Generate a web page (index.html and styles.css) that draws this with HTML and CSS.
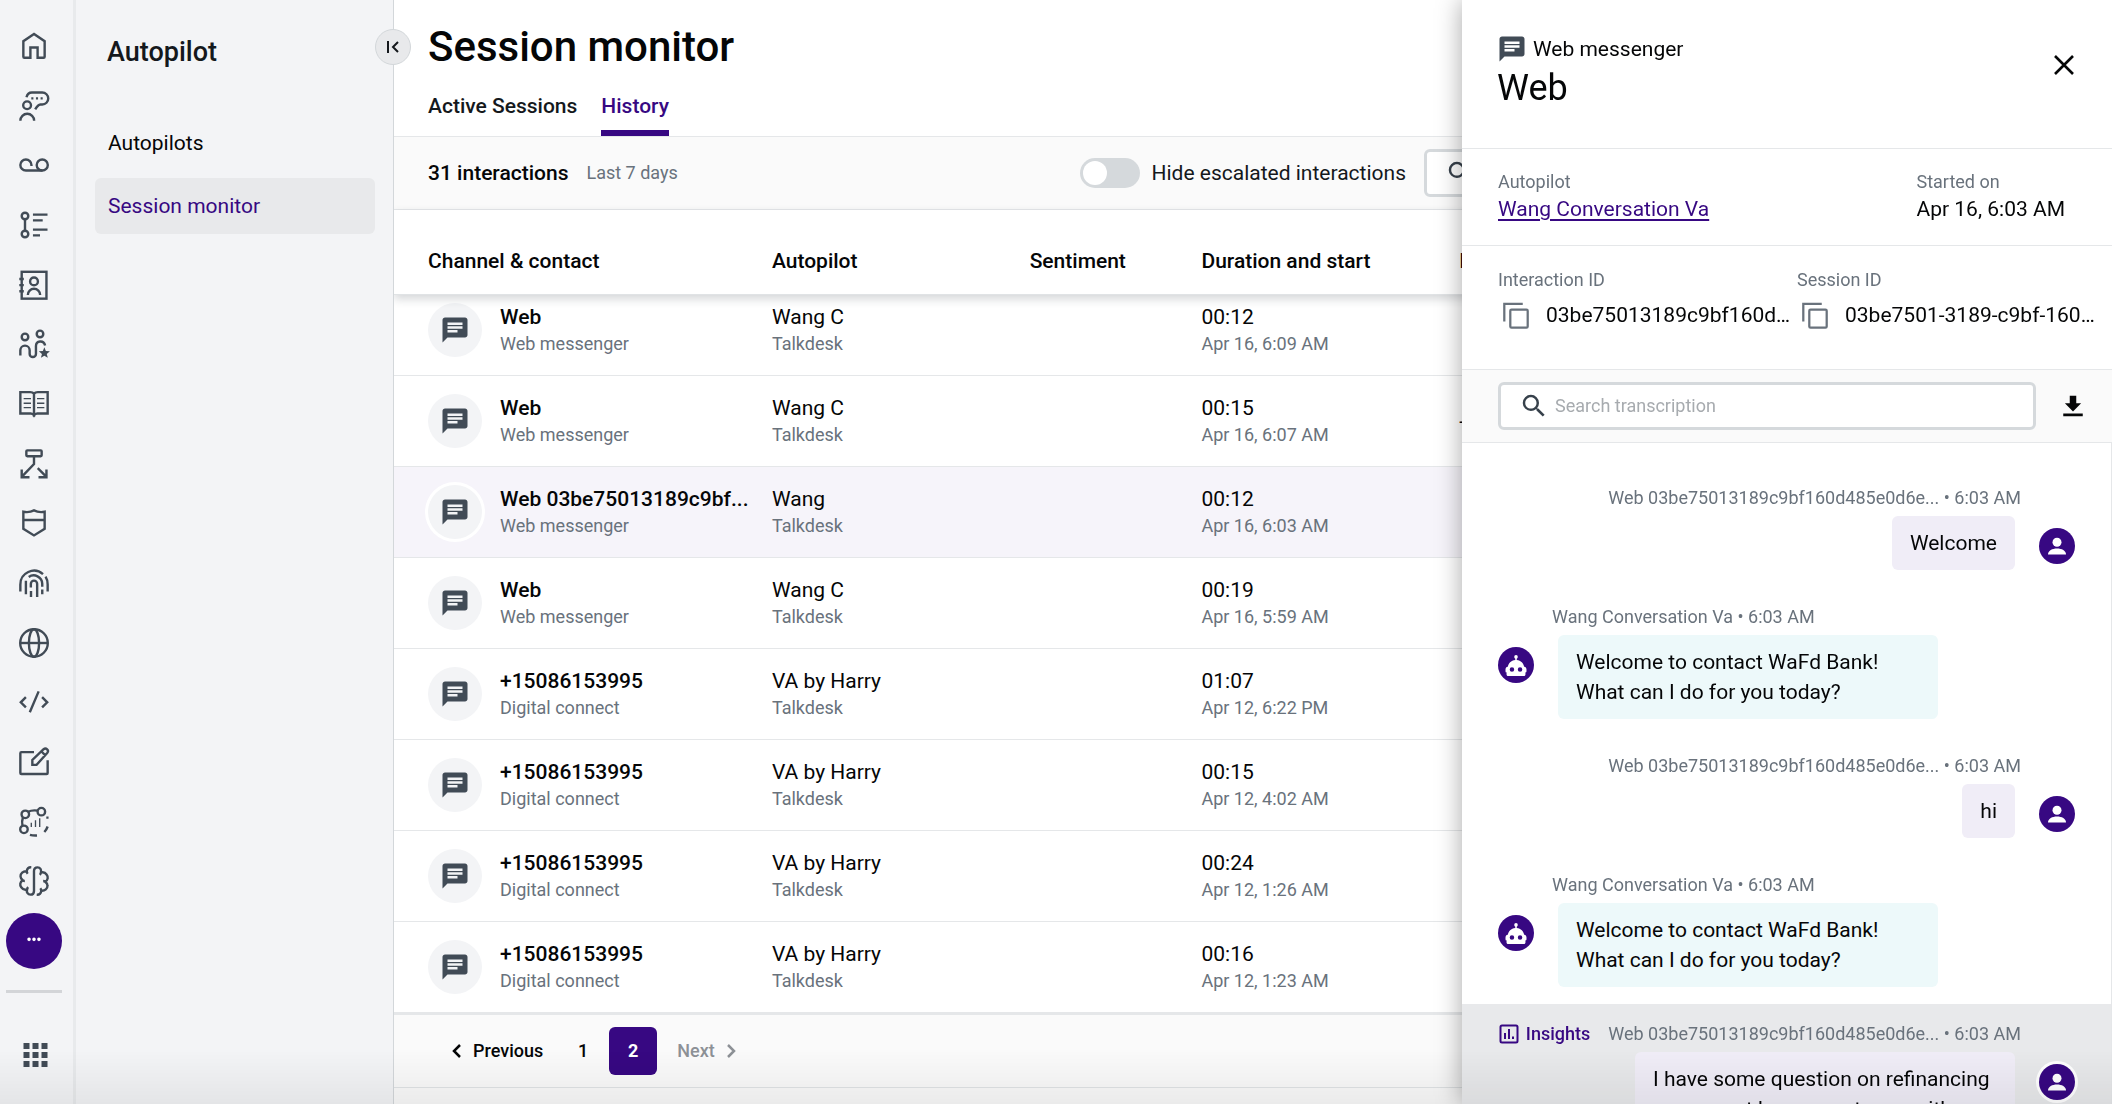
FILE: index.html
```html
<!DOCTYPE html>
<html lang="en">
<head>
    <meta charset="UTF-8">
    <meta name="viewport" content="width=device-width, initial-scale=1.0">
    <title>Session monitor</title>
    <link rel="stylesheet" href="styles.css">
</head>
<body>
    <!-- Shared icons -->
    <svg class="sprite" aria-hidden="true">
        <symbol id="chat" viewBox="0 0 24 24"><path fill="currentColor" d="M20 2H4c-1.1 0-2 .9-2 2v18l4-4h14c1.1 0 2-.9 2-2V4c0-1.100-.9-2-2-2zM6 9h12v2H6V9zm8 5H6v-2h8v2zm4-6H6V6h12v2z"/></symbol>
        <symbol id="search" viewBox="0 0 24 24"><path fill="currentColor" d="M15.500 14h-.79l-.28-.27A6.471 6.471 0 0 0 16 9.500 6.500 6.500 0 1 0 9.500 16c1.610 0 3.090-.59 4.230-1.570l.27.28v.79l5 4.990L20.490 19l-4.990-5zm-6 0C7.010 14 5 11.990 5 9.500S7.010 5 9.500 5 14 7.010 14 9.500 11.990 14 9.500 14z"/></symbol>
        <symbol id="user" viewBox="0 0 24 24"><circle cx="12" cy="9.500" r="3" fill="currentColor"/><path fill="currentColor" d="M6 17.600c0-2.600 2.800-4 6-4s6 1.400 6 4z"/></symbol>
        <symbol id="bot" viewBox="0 0 24 24"><circle cx="12" cy="6.600" r="1.200" fill="currentColor"/><path fill="currentColor" fill-rule="evenodd" d="M11.500 7h1v1.600c2.800.3 4.600 2.300 5 4.600.9.100 1.500.8 1.500 1.800v1.200c0 .5-.3.800-.7.8v1.300c0 .6-.4 1-1 1H6.700c-.6 0-1-.4-1-1V17c-.4 0-.7-.3-.7-.8V15c0-1 .6-1.700 1.500-1.800.4-2.300 2.200-4.300 5-4.600zM9.300 13.500a1.500 1.500 0 1 0 0 3 1.500 1.500 0 0 0 0-3zm5.400 0a1.500 1.500 0 1 0 0 3 1.500 1.500 0 0 0 0-3z"/></symbol>
        <symbol id="copy" viewBox="0 0 24 24"><path fill="none" stroke="currentColor" stroke-width="1.500" d="M4.200 16.400V4.600h12.300"/><rect x="8.200" y="8.400" width="11.600" height="12" rx=".8" fill="none" stroke="currentColor" stroke-width="1.500"/></symbol>
    </svg>

    <div class="app">
        <nav class="rail" aria-label="Applications">
            <div class="rail-list">
                <button class="rail-button" aria-label="Home"><svg viewBox="0 0 24 24"><path d="M12 4 4.900 8.800v10.300c0 .4.300.7.700.7h4V13h4.800v6.800h4c.4 0 .7-.3.700-.7V8.800z"/></svg></button>
                <button class="rail-button" aria-label="Conversations"><svg viewBox="0 0 24 24"><circle cx="7.400" cy="11.500" r="2.600"/><path d="M2.900 21.800a4.600 4.600 0 0 1 9.200 0M7 6.200C7.400 4.300 8.700 3 10.600 3h6.900a4 4 0 0 1 0 8h-1.200c-1.200.1-2.600 1.700-3.500 3.300"/><path stroke-dasharray="1.400 1.700" d="M10.200 6.900h7.600"/></svg></button>
                <button class="rail-button" aria-label="Voicemail"><svg viewBox="0 0 24 24"><path d="M10.300 12.600V12a3.700 3.700 0 1 0-3.700 3.700h11"/><circle cx="17.500" cy="12" r="3.700"/></svg></button>
                <button class="rail-button" aria-label="Activities"><svg viewBox="0 0 24 24"><circle cx="6" cy="6" r="2.200"/><circle cx="6" cy="18" r="2.200"/><path d="M6 8.200v7.600M11.300 5.100H21M11.300 8.900h6.500M11.300 15.100H21M11.300 18.900H16"/></svg></button>
                <button class="rail-button" aria-label="Contacts"><svg viewBox="0 0 24 24"><rect x="3.800" y="3.200" width="16.500" height="17.900"/><circle cx="12" cy="9.600" r="2.600"/><path d="M7.900 18.600a4.100 4.100 0 0 1 8.200 0M2.200 8h3M2.200 12.100h3M2.200 16.200h3"/></svg></button>
                <button class="rail-button" aria-label="Teams"><svg viewBox="0 0 24 24"><circle cx="6" cy="7.300" r="2.200"/><circle cx="16" cy="5.300" r="2.200"/><path d="M2.900 19.600v-3.400a3.100 3.100 0 0 1 6.200 0v2.400a2.100 2.100 0 0 0 4.200 0v-5.200c0-3.800 5.200-4.300 6.100-.4"/><path class="solid" d="m18.900 14.200 1 2.500 2.700.2-2.100 1.700.7 2.600-2.300-1.400-2.300 1.400.7-2.600-2.100-1.700 2.700-.2z"/></svg></button>
                <button class="rail-button" aria-label="Knowledge"><svg viewBox="0 0 24 24"><path d="M12 5.200c-.6-.8-1.400-1.100-2.500-1.100H2.900v14.200h6.900c1 0 1.700.4 2.200 1.300.5-.9 1.200-1.300 2.200-1.300h6.900V4.100h-6.600c-1.100 0-1.900.3-2.500 1.100zM12 5.200v15.300"/><path class="thin" d="M5.100 8.400H10M5.100 11.500H10M5.100 14.400H10M14 8.400h4.900M14 11.500h4.900M14 14.400h4.900"/></svg></button>
                <button class="rail-button" aria-label="Routing"><svg viewBox="0 0 24 24"><rect x="6.900" y="2.900" width="10.200" height="3.900" rx=".6"/><path d="M12 6.800V12l-8.200 8.600M3.800 15.600v5.200H9M14.500 14.800l5.800 5.800M20.300 15.600v5.200H15"/></svg></button>
                <button class="rail-button" aria-label="Security"><svg viewBox="0 0 24 24"><path d="M4.900 4.500c2.700.5 5 .2 7.100-.9 2.100 1.100 4.400 1.400 7.100.9v11.400L12 20.300l-7.100-4.400zM4.900 10h14.200"/></svg></button>
                <button class="rail-button" aria-label="Identity"><svg viewBox="0 0 24 24"><path d="M2.900 17.600v-4.500a9.100 9.100 0 0 1 15.100-7M19.700 7.700a9 9 0 0 1 1.400 5.300v4.600M6.600 19.500v-9M8.500 8a5.700 5.700 0 0 1 9 4.500v2M9.900 15v-2.500a2.100 2.100 0 0 1 4.200 0v8.800M10 17.300v4M17.500 16.300v3.200"/></svg></button>
                <button class="rail-button" aria-label="Web"><svg viewBox="0 0 24 24"><circle cx="12" cy="12" r="9.200"/><ellipse cx="12" cy="12" rx="3.400" ry="9.200"/><path d="M2.800 12h18.400"/></svg></button>
                <button class="rail-button" aria-label="Developers"><svg viewBox="0 0 24 24"><path d="M6.600 8.800 3.200 12.200l3.400 3.400M17.400 8.800l3.400 3.400-3.400 3.400M15.100 4.900 9.200 18.800"/></svg></button>
                <button class="rail-button" aria-label="Editor"><svg viewBox="0 0 24 24"><path d="M12 5.400H3.600a.7.7 0 0 0-.7.700v13.200c0 .4.300.7.700.7h16.800c.4 0 .7-.3.700-.7v-8.500M10.900 13.900v-3.300l7.500-7.100c1.600-1.300 3.900.7 2.400 2.500L13.700 13.900zM17 5l2.400 2.400"/></svg></button>
                <button class="rail-button" aria-label="Analytics"><svg viewBox="0 0 24 24"><circle cx="6.200" cy="6.900" r="2.500"/><circle cx="16.900" cy="5.100" r="2.500"/><circle cx="5.300" cy="16.900" r="2.500"/><path d="M8 5.200c2-1 4-1.200 6.400-.8M4.600 9c-.6 1.700-.7 3.400-.3 5.300M9.300 20.600c1.500.4 3 .5 4.700.4M18.900 18.700c.9-1 1.700-2.200 2.200-3.700M20.200 9.100h1.500"/><path class="thin" d="M10.200 12.500v2.800M13 10.800v4.500M15.800 9.500v5.800"/></svg></button>
                <button class="rail-button" aria-label="AI"><svg viewBox="0 0 24 24"><path d="M10.200 2.900c-1.800-.2-3 .9-3 2.600-2.500-.3-4.300 1.500-4.200 3.400 0 1.200.7 2 1.500 2.600-1.900 1.200-2.100 3.200-1 4.700.9 1.300 2.200 1.900 3.900 1.400-.6 2 .6 3.500 2.200 3.500 1.500 0 2.400-1 2.400-2.500V5.400c0-1.500 1-2.500 2.400-2.500 1.600 0 2.800 1.500 2.200 3.500 1.700-.5 3 .1 3.900 1.400 1.100 1.500.9 3.500-1 4.700.8.600 1.500 1.400 1.500 2.600.1 1.900-1.700 3.700-4.200 3.400 0 1.700-1.200 2.800-3 2.600M7.200 5.500c0 .7.200 1.200.6 1.700M4.500 11.500c.4.300.9.500 1.400.5M7.400 17.600c0-.6.300-1.100.7-1.500M16.600 6.400c0 .6-.3 1.100-.7 1.500M19.500 12.500c-.4-.3-.9-.5-1.400-.5M16.800 18.500c0-.7-.2-1.200-.6-1.700"/></svg></button>
                <button class="rail-button rail-more" aria-label="More"><svg viewBox="0 0 24 24"><path class="solid" d="M8.700 9.700a1.200 1.200 0 1 0 0 2.400 1.200 1.200 0 0 0 0-2.400zm3.300 0a1.200 1.200 0 1 0 0 2.400 1.200 1.200 0 0 0 0-2.400zm3.300 0a1.200 1.200 0 1 0 0 2.400 1.200 1.200 0 0 0 0-2.400z"/></svg></button>
            </div>
            <hr class="rail-line">
            <button class="rail-button" aria-label="Apps"><svg viewBox="0 0 24 24"><path class="solid" d="M5 4h4v4H5zm6 0h4v4h-4zm6 0h4v4h-4zM5 10h4v4H5zm6 0h4v4h-4zm6 0h4v4h-4zM5 16h4v4H5zm6 0h4v4h-4zm6 0h4v4h-4z"/></svg></button>
        </nav>

        <aside class="sidebar">
            <h2 class="sidebar-title">Autopilot</h2>
            <nav class="sidebar-nav" aria-label="Autopilot">
                <a class="sidebar-link" href="#">Autopilots</a>
                <a class="sidebar-link active" href="#">Session monitor</a>
            </nav>
            <button class="collapse" aria-label="Collapse menu"><svg viewBox="0 0 18 18"><path d="M4 3v12M14 4 9 9l5 5"/></svg></button>
        </aside>

        <main class="content">
            <header class="page-header">
                <h1>Session monitor</h1>
                <nav class="tabs" aria-label="Sessions">
                    <a class="tab" href="#">Active Sessions</a>
                    <a class="tab active" href="#">History</a>
                </nav>
            </header>

            <div class="filters">
                <strong class="count">31 interactions</strong>
                <span class="muted">Last 7 days</span>
                <label class="toggle">
                    <input type="checkbox">
                    Hide escalated interactions
                </label>
                <label class="search-box filters-search">
                    <svg><use href="#search"/></svg>
                    <input type="search" aria-label="Search interactions">
                </label>
            </div>

            <table class="sessions">
                <colgroup>
                    <col class="col-contact">
                    <col class="col-autopilot">
                    <col class="col-sentiment">
                    <col class="col-duration">
                    <col>
                </colgroup>
                <thead>
                    <tr>
                        <th>Channel &amp; contact</th>
                        <th>Autopilot</th>
                        <th>Sentiment</th>
                        <th>Duration and start</th>
                        <th>Intent</th>
                    </tr>
                </thead>
                <tbody>
                    <tr>
                        <td><div class="contact"><span class="channel"><svg><use href="#chat"/></svg></span><div><b>Web</b><small>Web messenger</small></div></div></td>
                        <td>Wang C<small>Talkdesk</small></td>
                        <td></td>
                        <td>00:12<small>Apr 16, 6:09 AM</small></td>
                        <td></td>
                    </tr>
                    <tr>
                        <td><div class="contact"><span class="channel"><svg><use href="#chat"/></svg></span><div><b>Web</b><small>Web messenger</small></div></div></td>
                        <td>Wang C<small>Talkdesk</small></td>
                        <td></td>
                        <td>00:15<small>Apr 16, 6:07 AM</small></td>
                        <td>-</td>
                    </tr>
                    <tr class="selected">
                        <td><div class="contact"><span class="channel"><svg><use href="#chat"/></svg></span><div><b>Web 03be75013189c9bf...</b><small>Web messenger</small></div></div></td>
                        <td>Wang<small>Talkdesk</small></td>
                        <td></td>
                        <td>00:12<small>Apr 16, 6:03 AM</small></td>
                        <td></td>
                    </tr>
                    <tr>
                        <td><div class="contact"><span class="channel"><svg><use href="#chat"/></svg></span><div><b>Web</b><small>Web messenger</small></div></div></td>
                        <td>Wang C<small>Talkdesk</small></td>
                        <td></td>
                        <td>00:19<small>Apr 16, 5:59 AM</small></td>
                        <td></td>
                    </tr>
                    <tr>
                        <td><div class="contact"><span class="channel"><svg><use href="#chat"/></svg></span><div><b>+15086153995</b><small>Digital connect</small></div></div></td>
                        <td>VA by Harry<small>Talkdesk</small></td>
                        <td></td>
                        <td>01:07<small>Apr 12, 6:22 PM</small></td>
                        <td></td>
                    </tr>
                    <tr>
                        <td><div class="contact"><span class="channel"><svg><use href="#chat"/></svg></span><div><b>+15086153995</b><small>Digital connect</small></div></div></td>
                        <td>VA by Harry<small>Talkdesk</small></td>
                        <td></td>
                        <td>00:15<small>Apr 12, 4:02 AM</small></td>
                        <td></td>
                    </tr>
                    <tr>
                        <td><div class="contact"><span class="channel"><svg><use href="#chat"/></svg></span><div><b>+15086153995</b><small>Digital connect</small></div></div></td>
                        <td>VA by Harry<small>Talkdesk</small></td>
                        <td></td>
                        <td>00:24<small>Apr 12, 1:26 AM</small></td>
                        <td></td>
                    </tr>
                    <tr>
                        <td><div class="contact"><span class="channel"><svg><use href="#chat"/></svg></span><div><b>+15086153995</b><small>Digital connect</small></div></div></td>
                        <td>VA by Harry<small>Talkdesk</small></td>
                        <td></td>
                        <td>00:16<small>Apr 12, 1:23 AM</small></td>
                        <td></td>
                    </tr>
                </tbody>
            </table>

            <nav class="pagination" aria-label="Pages">
                <button class="page-step"><svg viewBox="0 0 18 18"><path d="M12 3 6 9l6 6"/></svg>Previous</button>
                <button class="page">1</button>
                <button class="page current" aria-current="page">2</button>
                <button class="page-step" disabled>Next<svg viewBox="0 0 18 18"><path d="m6 3 6 6-6 6"/></svg></button>
            </nav>
        </main>
    </div>

    <!-- Session details -->
    <section class="drawer" aria-label="Session details">
        <header class="drawer-header">
            <div>
                <div class="drawer-channel"><svg><use href="#chat"/></svg>Web messenger</div>
                <h2>Web</h2>
            </div>
            <button class="close" aria-label="Close"><svg viewBox="0 0 24 24"><path d="m3 3 18 18M21 3 3 21"/></svg></button>
        </header>

        <div class="drawer-info">
            <div>
                <small>Autopilot</small>
                <a href="#">Wang Conversation Va</a>
            </div>
            <div class="started">
                <small>Started on</small>
                Apr 16, 6:03 AM
            </div>
        </div>

        <div class="drawer-ids">
            <div>
                <small>Interaction ID</small>
                <div class="id-value"><button aria-label="Copy interaction ID"><svg><use href="#copy"/></svg></button>03be75013189c9bf160d…</div>
            </div>
            <div>
                <small>Session ID</small>
                <div class="id-value"><button aria-label="Copy session ID"><svg><use href="#copy"/></svg></button>03be7501-3189-c9bf-160…</div>
            </div>
        </div>

        <div class="drawer-search">
            <label class="search-box">
                <svg><use href="#search"/></svg>
                <input type="search" placeholder="Search transcription" aria-label="Search transcription">
            </label>
            <button class="download" aria-label="Download"><svg viewBox="0 0 24 24"><path class="solid" d="M9 2.500h6v7h4.500L12 17 4.500 9.500H9zM3 19h18v2.500H3z"/></svg></button>
        </div>

        <div class="messages">
            <article class="message from-user">
                <div class="meta">Web 03be75013189c9bf160d485e0d6e... • 6:03 AM</div>
                <div class="line"><p class="bubble">Welcome</p><span class="avatar"><svg><use href="#user"/></svg></span></div>
            </article>
            <article class="message">
                <div class="meta">Wang Conversation Va • 6:03 AM</div>
                <div class="line"><span class="avatar"><svg><use href="#bot"/></svg></span><p class="bubble">Welcome to contact WaFd Bank! What can I do for you today?</p></div>
            </article>
            <article class="message from-user">
                <div class="meta">Web 03be75013189c9bf160d485e0d6e... • 6:03 AM</div>
                <div class="line"><p class="bubble">hi</p><span class="avatar"><svg><use href="#user"/></svg></span></div>
            </article>
            <article class="message">
                <div class="meta">Wang Conversation Va • 6:03 AM</div>
                <div class="line"><span class="avatar"><svg><use href="#bot"/></svg></span><p class="bubble">Welcome to contact WaFd Bank! What can I do for you today?</p></div>
            </article>
            <article class="message from-user highlighted">
                <div class="meta">
                    <button class="insights"><svg viewBox="0 0 24 24"><rect x="3.500" y="3.500" width="17" height="17" rx="1.500"/><path d="M8 17v-6M12 17V7M16 17v-2.500"/></svg>Insights</button>
                    Web 03be75013189c9bf160d485e0d6e... • 6:03 AM
                </div>
                <div class="line"><p class="bubble">I have some question on refinancing my current home mortgage with</p><span class="avatar"><svg><use href="#user"/></svg></span></div>
            </article>
        </div>
    </section>
</body>
</html>
```

FILE: styles.css
```css
/* General */
* {
    box-sizing: border-box;
}

body {
    margin: 0;
    height: 100vh;
    overflow: hidden;
    font-family: Roboto, Arial, sans-serif;
    font-size: 21px;
    line-height: 28px;
    color: #050607;
    background-color: #fff;
}

h1, h2, p {
    margin: 0;
    font-weight: 500;
}

button {
    padding: 0;
    border: none;
    background: none;
    font: inherit;
    color: inherit;
    cursor: pointer;
}

a {
    color: inherit;
    text-decoration: none;
}

small {
    display: block;
    font-size: 18px;
    line-height: 26px;
    color: #69727c;
}

svg {
    display: block;
    flex: none;
    width: 30px;
    height: 30px;
    fill: none;
    stroke: none;
}

.sprite {
    display: none;
}

.solid {
    fill: currentColor;
    stroke: none;
}

.app {
    display: flex;
    height: 100%;
}

/* shade along the bottom edge of the window */
body::after {
    content: "";
    position: fixed;
    left: 0;
    right: 0;
    bottom: 0;
    height: 54px;
    background: linear-gradient(rgba(0, 0, 0, 0), rgba(0, 0, 0, 0.06));
    pointer-events: none;
    z-index: 3;
}

/* Icon rail */
.rail {
    flex: none;
    display: flex;
    flex-direction: column;
    align-items: center;
    width: 76px;
    padding: 18px 5px 21px 0;
    background-color: #f3f4f6;
    border-right: 3px solid #e8eaec;
    color: #414b56;
}

.rail-list {
    flex: 1;
    display: flex;
    flex-direction: column;
    justify-content: space-between;
}

.rail-button {
    display: grid;
    place-items: center;
    width: 56px;
    height: 56px;
    border-radius: 50%;
}

.rail-button svg {
    width: 36px;
    height: 36px;
    stroke: currentColor;
    stroke-width: 1.6;
}

.rail-button .thin {
    stroke-width: 0.9;
}

.rail-button .solid {
    stroke: none;
}

.rail-more {
    background-color: #370882;
    color: #fff;
}

.rail-line {
    width: 56px;
    height: 3px;
    margin: 21px 0 34px;
    border: none;
    background-color: #d3d5d8;
}

/* Sidebar */
.sidebar {
    position: relative;
    flex: none;
    width: 318px;
    padding: 36px 18px 0 19px;
    background-color: #f3f4f6;
    border-right: 1px solid #d3d7da;
}

.sidebar-title {
    margin: 0 0 47px 12px;
    font-size: 27px;
    line-height: 32px;
    color: #14181c;
}

.sidebar-nav {
    display: flex;
    flex-direction: column;
    gap: 7px;
}

.sidebar-link {
    padding: 14px 13px;
    border-radius: 6px;
}

.sidebar-link.active {
    background-color: #e8e9eb;
    color: #370882;
}

.collapse {
    position: absolute;
    top: 29px;
    right: -18px;
    display: grid;
    place-items: center;
    width: 36px;
    height: 36px;
    border: 1px solid #d3d7da;
    border-radius: 50%;
    background-color: #e8e9eb;
    z-index: 1;
}

.collapse svg {
    width: 18px;
    height: 18px;
    stroke: #14181c;
    stroke-width: 2;
}

/* Page header */
.content {
    flex: 1;
    display: flex;
    flex-direction: column;
    min-width: 0;
    overflow: hidden;
    background-color: #fafafa;
}

.page-header {
    padding: 22px 34px 0;
    border-bottom: 1px solid #e5e7e9;
    background-color: #fff;
}

h1 {
    font-size: 42px;
    line-height: 50px;
}

.tabs {
    display: flex;
    gap: 24px;
    margin-top: 20px;
}

.tab {
    padding-bottom: 10px;
    border-bottom: 6px solid transparent;
    font-weight: 500;
    color: #14181c;
}

.tab.active {
    border-color: #370882;
    color: #370882;
}

/* Filters */
.filters {
    display: flex;
    align-items: center;
    gap: 18px;
    padding: 12px 24px 12px 34px;
    border-bottom: 1px solid #e5e7e9;
}

.count {
    font-weight: 500;
}

.muted {
    font-size: 18px;
    color: #69727c;
}

.toggle {
    display: flex;
    align-items: center;
    gap: 12px;
    margin-left: auto;
    color: #14181c;
}

.toggle input {
    appearance: none;
    display: flex;
    align-items: center;
    width: 60px;
    height: 30px;
    margin: 0;
    padding: 3px;
    border-radius: 15px;
    background-color: #d5d9dc;
}

.toggle input::before {
    content: "";
    width: 24px;
    height: 24px;
    border-radius: 50%;
    background-color: #fff;
}

.toggle input:checked {
    justify-content: flex-end;
    background-color: #370882;
}

.search-box {
    display: flex;
    align-items: center;
    gap: 6px;
    height: 48px;
    padding: 0 18px;
    border: 3px solid #d5d9dc;
    border-radius: 6px;
    background-color: #fff;
    color: #37414b;
}

.search-box input {
    flex: 1;
    min-width: 0;
    padding: 0;
    border: none;
    outline: none;
    background: none;
    font: inherit;
    font-size: 18px;
}

.search-box input::placeholder {
    color: #a7abaf;
}

.filters-search {
    flex: 0 0 40%;
}

/* Sessions table */
.sessions {
    width: 100%;
    table-layout: fixed;
    border-spacing: 0;
    background-color: #fff;
}

.col-contact {
    width: 22%;
}

.col-autopilot,
.col-duration {
    width: 15%;
}

.col-sentiment {
    width: 10%;
}

.sessions thead {
    position: relative;
    box-shadow: 0 4px 9px rgba(40, 50, 60, 0.2);
}

.sessions th {
    padding: 37px 0 19px;
    border-bottom: 1px solid #e0e3e5;
    font-weight: 500;
    text-align: left;
    background-color: #fff;
}

.sessions td {
    padding: 18px 0;
    border-bottom: 1px solid #e5e7e9;
    white-space: nowrap;
}

.sessions th:first-child,
.sessions td:first-child {
    padding-left: 34px;
}

.sessions tr:first-child td {
    padding-top: 8px;
}

.sessions tr:last-child td {
    border-bottom: none;
}

.sessions b {
    font-weight: 500;
}

.contact {
    display: flex;
    align-items: center;
    gap: 18px;
}

.channel {
    display: grid;
    place-items: center;
    width: 54px;
    height: 54px;
    border-radius: 50%;
    background-color: #f3f4f6;
    box-shadow: 0 0 0 3px #fff;
    color: #414b56;
}

.selected td {
    background-color: #f6f4fa;
}

/* Pagination */
.pagination {
    display: flex;
    align-items: center;
    padding: 12px 54px;
    border-top: 3px solid #e5e7e9;
    border-bottom: 1px solid #e0e3e5;
    font-size: 18px;
}

.pagination svg {
    width: 18px;
    height: 18px;
    stroke: currentColor;
    stroke-width: 2.5;
}

.page-step {
    display: flex;
    align-items: center;
    gap: 7px;
    font-weight: 500;
}

.page-step:disabled {
    color: #8d9196;
}

.page {
    width: 48px;
    height: 48px;
    margin-left: 16px;
    border-radius: 6px;
    font-weight: 500;
}

.page.current {
    margin: 0 20px 0 2px;
    background-color: #370882;
    color: #fff;
    font-weight: 700;
}

/* Drawer */
.drawer {
    position: fixed;
    top: 0;
    right: 0;
    bottom: 0;
    display: flex;
    flex-direction: column;
    width: 650px;
    background-color: #fff;
    box-shadow: 0 0 24px rgba(0, 0, 0, 0.35);
    z-index: 2;
}

.drawer small {
    line-height: 27px;
}

.drawer-header {
    display: flex;
    justify-content: space-between;
    padding: 34px 36px 36px 35px;
    border-bottom: 1px solid #e5e7e9;
}

.drawer-channel {
    display: flex;
    align-items: center;
    gap: 6px;
}

.drawer-channel svg {
    color: #414b56;
}

.drawer-header h2 {
    font-size: 36px;
    line-height: 48px;
    font-weight: 400;
}

.close {
    align-self: flex-start;
    margin-top: 19px;
}

.close svg {
    width: 24px;
    height: 24px;
    stroke: currentColor;
    stroke-width: 2.6;
}

.drawer-info {
    display: flex;
    justify-content: space-between;
    padding: 19px 47px 22px 36px;
    border-bottom: 1px solid #e5e7e9;
}

.drawer-info a {
    color: #370882;
    text-decoration: underline;
    text-underline-offset: 3px;
}

.drawer-ids {
    display: grid;
    grid-template-columns: 1fr 1fr;
    padding: 20px 16px 36px 36px;
    border-bottom: 1px solid #e5e7e9;
}

.id-value {
    display: flex;
    align-items: center;
    gap: 12px;
    margin-top: 4px;
    white-space: nowrap;
}

.id-value svg {
    width: 36px;
    height: 36px;
    color: #69727c;
}

.drawer-search {
    display: flex;
    align-items: center;
    gap: 24px;
    padding: 12px 26px 12px 36px;
    border-bottom: 1px solid #e5e7e9;
    background-color: #fafafa;
}

.drawer-search .search-box {
    flex: 1;
}

.download svg {
    width: 26px;
    height: 26px;
}

/* Transcription */
.messages {
    flex: 1;
    min-height: 0;
    overflow: hidden;
    padding-top: 25px;
    border-right: 1px solid #e5e7e9;
}

.message {
    padding: 18px 36px 17px;
}

.meta {
    display: flex;
    align-items: center;
    justify-content: flex-start;
    gap: 18px;
    height: 24px;
    margin: 0 54px 6px;
    font-size: 18px;
    color: #69727c;
    white-space: nowrap;
}

.line {
    display: flex;
    gap: 24px;
}

.from-user .meta {
    justify-content: flex-end;
    margin-left: 0;
}

.from-user .line {
    justify-content: flex-end;
}

.bubble {
    max-width: 380px;
    padding: 12px 18px;
    border-radius: 6px;
    background-color: #edf9fa;
    line-height: 30px;
    font-weight: 400;
}

.from-user .bubble {
    background-color: #f0edf7;
}

.avatar {
    flex: none;
    width: 36px;
    height: 36px;
    margin-top: 12px;
    border-radius: 50%;
    background-color: #370882;
    box-shadow: 0 0 0 3px #fff;
    color: #fff;
}

.avatar svg {
    width: 36px;
    height: 36px;
}

.highlighted {
    background-color: #e8e9eb;
}

.insights {
    display: flex;
    align-items: center;
    gap: 5px;
    font-weight: 500;
    color: #370882;
}

.insights svg {
    width: 24px;
    height: 24px;
    stroke: currentColor;
    stroke-width: 2;
}
```
